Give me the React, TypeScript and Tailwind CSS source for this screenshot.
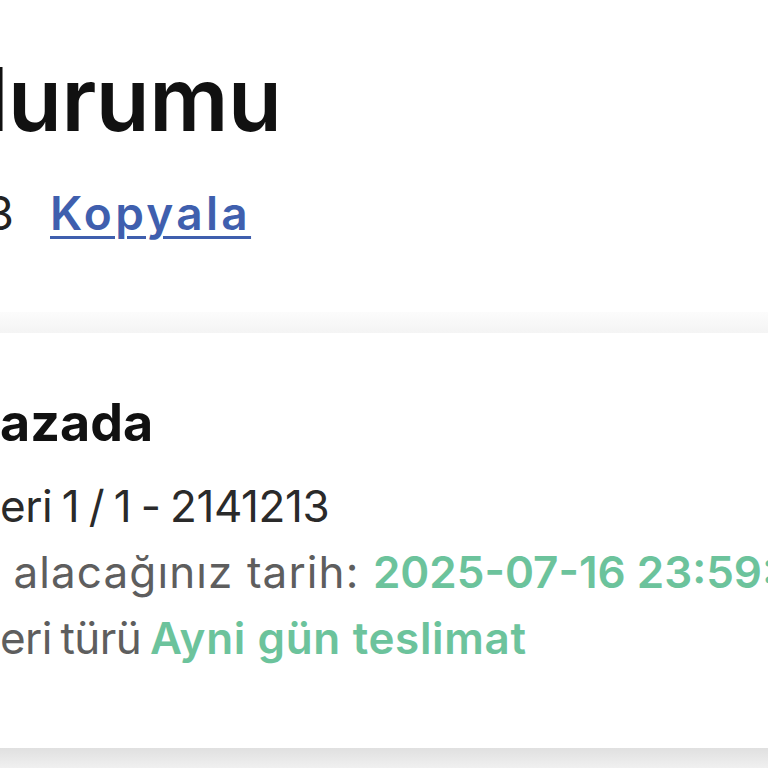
import React from 'react';

// Hidden prefix sits in a fixed-width box, right-aligned, so it overflows off the left edge.
function Clip({ w, children }: { w: string; children: React.ReactNode }) {
  return <span className={`${w} shrink-0 flex justify-end whitespace-nowrap`}>{children}</span>;
}

export default function App() {
  return (
    <div className="w-[768px] h-[768px] overflow-hidden bg-white font-['Inter',sans-serif]">
      <div className="h-[312px] pt-[55px]">
        <h1 className="flex whitespace-nowrap text-[88px] leading-none font-semibold tracking-[-0.5px] text-[#111]">
          <Clip w="w-[8px]">Sipariş d</Clip>
          <span>urumu</span>
        </h1>
        <div className="mt-[47px] flex items-baseline whitespace-nowrap text-[46px] leading-none">
          <Clip w="w-[14px]">
            <span className="text-[#222]">Sipariş No: 30591463</span>
          </Clip>
          <a className="ml-[36px] font-semibold tracking-[3.3px] text-[#3f5fae] underline decoration-[3px] underline-offset-[6px]">
            Kopyala
          </a>
        </div>
      </div>

      <div className="h-[21px] bg-linear-to-b from-[#fcfcfc] via-[#f8f8f8] to-[#f4f4f4]" />

      <div className="h-[415px] pt-[64px]">
        <div className="flex whitespace-nowrap text-[52px] leading-none font-bold text-[#111]">
          <Clip w="w-[0px]">Mağ</Clip>
          <span>azada</span>
        </div>
        <div className="mt-[24px] text-[44px] leading-[66px] whitespace-nowrap">
          <div className="flex text-[#2a2a2a]">
            <Clip w="w-[0px]">Gönd</Clip>
            <span className="tracking-[-0.4px] [word-spacing:-2.5px]">eri 1 / 1 - 2141213</span>
          </div>
          <div className="flex text-[#5e5e5e]">
            <Clip w="w-[0px]">Teslim</Clip>
            <span className="tracking-[1.1px]">
              &nbsp;alacağınız tarih:{' '}
              <span className="font-semibold tracking-normal text-[#6cc39c]">2025-07-16 23:59:59</span>
            </span>
          </div>
          <div className="flex text-[#5e5e5e]">
            <Clip w="w-[0px]">Gönd</Clip>
            <span className="tracking-[-0.6px] [word-spacing:-3px]">
              eri türü{' '}
              <span className="font-semibold tracking-[0.65px] [word-spacing:normal] text-[#6cc39c]">Ayni gün teslimat</span>
            </span>
          </div>
        </div>
      </div>

      <div className="h-[20px] bg-linear-to-b from-[#e0e0e0] to-[#f0f0f0]" />
    </div>
  );
}
